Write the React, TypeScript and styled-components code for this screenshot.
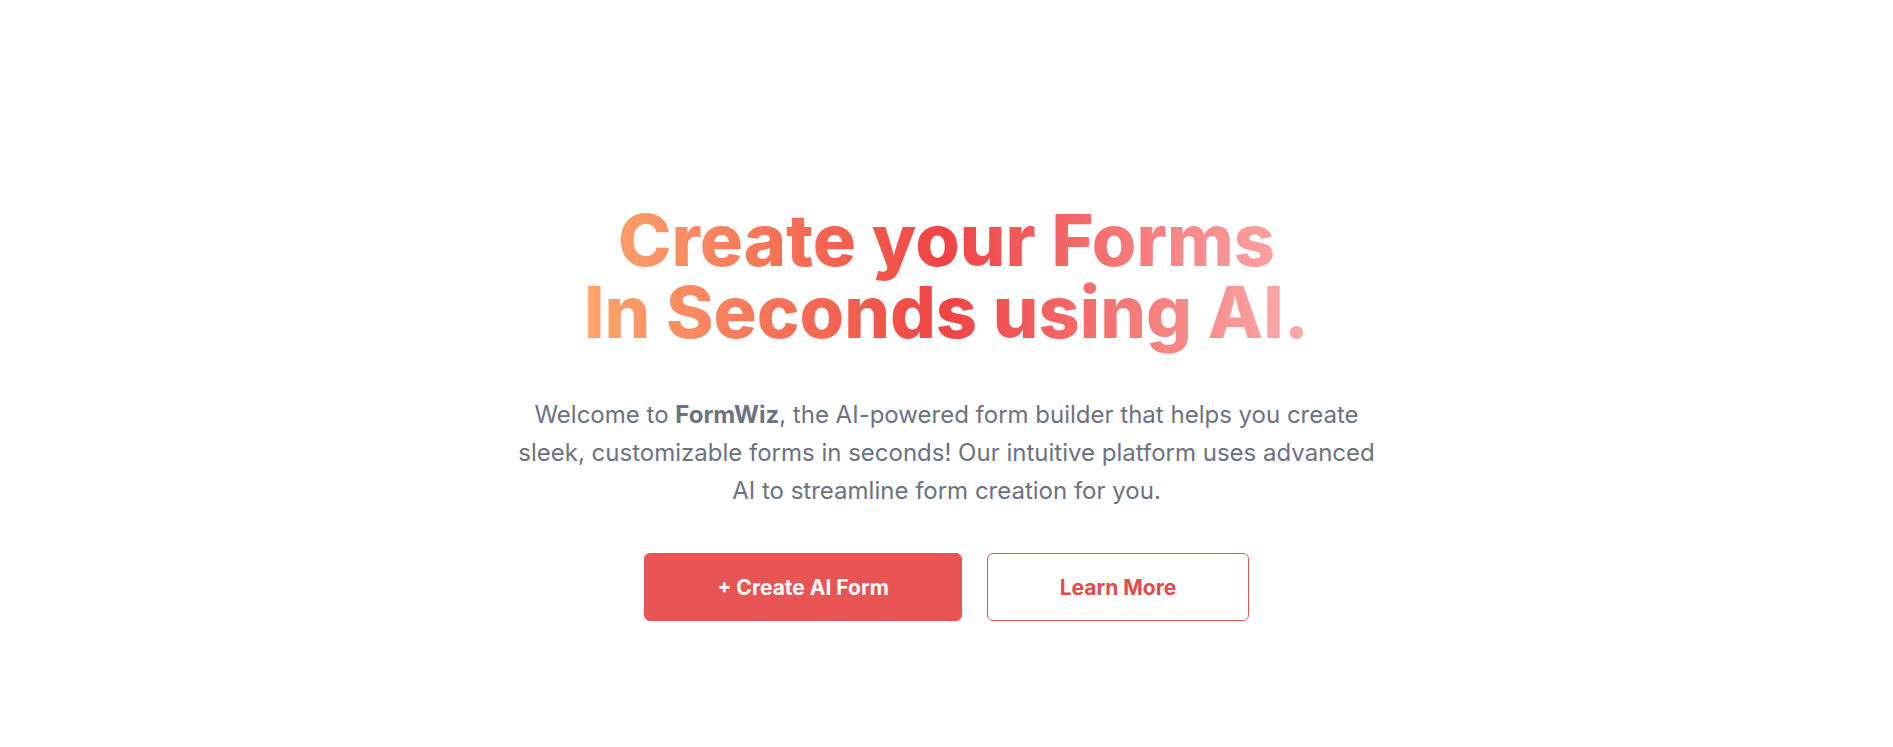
import React from "react";
import styled, { createGlobalStyle } from "styled-components";

const GlobalStyle = createGlobalStyle`
  html, body {
    margin: 0;
    padding: 0;
    background: #ffffff;
    font-family: Inter, "Noto Sans", sans-serif;
  }
  * { box-sizing: border-box; }
`;

const Hero = styled.section`
  display: flex;
  flex-direction: column;
  align-items: center;
  padding-top: 204px;
  min-height: 747px;
`;

const Title = styled.h1`
  margin: 0;
  padding-bottom: 16px;
  display: inline-block;
  text-align: center;
  font-size: 72px;
  line-height: 72px;
  font-weight: 800;
  letter-spacing: 0;
  background: linear-gradient(90deg, #fca76d 0%, #ef4444 50%, #fcacac 100%);
  -webkit-background-clip: text;
  background-clip: text;
  color: transparent;
`;

const Lead = styled.p`
  margin: 32px 0 0;
  max-width: 872px;
  text-align: center;
  font-size: 24px;
  line-height: 38px;
  color: #6b7280;
  font-weight: 400;

  strong {
    font-weight: 700;
  }
`;

const Actions = styled.div`
  display: flex;
  gap: 25px;
  margin-top: 43px;
`;

const Button = styled.button<{ $variant: "solid" | "outline" }>`
  height: 68px;
  width: ${(p) => (p.$variant === "solid" ? "318px" : "262px")};
  border-radius: 6px;
  font-family: Inter, "Noto Sans", sans-serif;
  font-size: 21px;
  font-weight: 700;
  cursor: pointer;
  border: 1px solid #e85353;
  background: ${(p) => (p.$variant === "solid" ? "#e85353" : "#ffffff")};
  color: ${(p) => (p.$variant === "solid" ? "#ffffff" : "#e34a4a")};
`;

export default function App() {
  return (
    <>
      <GlobalStyle />
      <Hero>
        <Title>
          Create your Forms
          <br />
          In Seconds using AI.
        </Title>
        <Lead>
          Welcome to <strong>FormWiz</strong>, the AI-powered form builder that helps you create
          sleek, customizable forms in seconds! Our intuitive platform uses advanced AI to
          streamline form creation for you.
        </Lead>
        <Actions>
          <Button $variant="solid">+ Create AI Form</Button>
          <Button $variant="outline">Learn More</Button>
        </Actions>
      </Hero>
    </>
  );
}
